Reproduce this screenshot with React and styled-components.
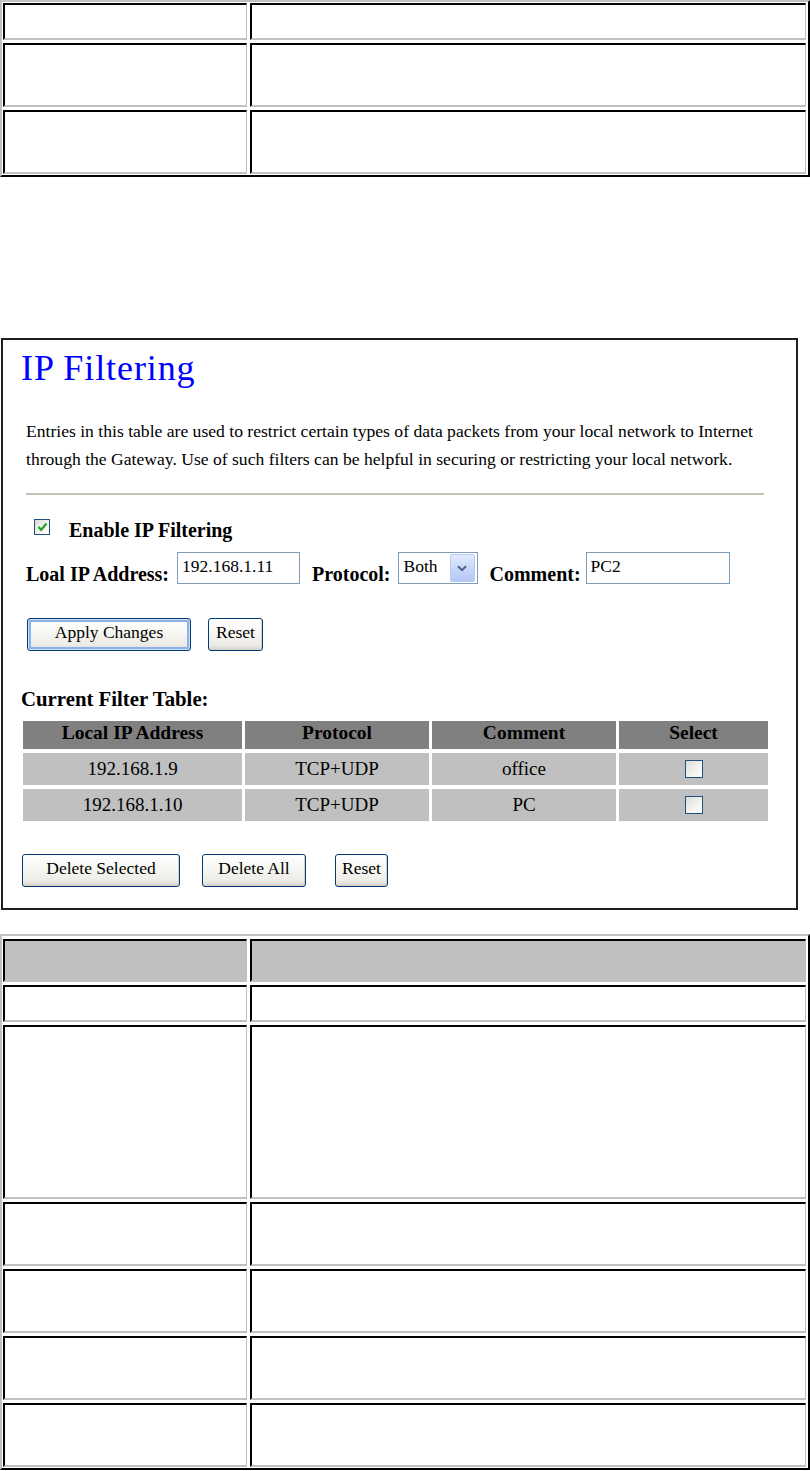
import styled, { createGlobalStyle } from "styled-components";

const GlobalStyle = createGlobalStyle`
  html, body {
    margin: 0;
    padding: 0;
    background: #fff;
  }
  body {
    font-family: "Liberation Serif", "Times New Roman", serif;
    color: #000;
  }
`;

const Page = styled.div`
  width: 810px;
`;

/* ---------- empty description tables ---------- */

const InfoTable = styled.div`
  display: grid;
  grid-template-columns: 244px 1fr;
  grid-template-rows: ${({ $rows }) => $rows.map((r) => `${r}px`).join(" ")};
  gap: 3px;
  box-sizing: border-box;
  width: 810px;
  margin-top: ${({ $top }) => $top}px;
  padding: ${({ $padTop }) => $padTop}px 2px 1px 1px;
  border: 2px solid;
  border-color: #c0c0c0 #000 #000 #c0c0c0;
`;

const InfoCell = styled.div`
  box-sizing: border-box;
  border-top: 2px solid #000;
  border-left: 2px solid #000;
  border-bottom: 2px solid #c0c0c0;
  border-right: 1px solid #c0c0c0;
  background: ${({ $head }) => ($head ? "#c0c0c0" : "#fff")};
`;

/* ---------- screenshot panel ---------- */

const Panel = styled.section`
  box-sizing: border-box;
  width: 797px;
  margin: 161px 0 0 1px;
  border: 2px solid #1f1f1f;
  padding: 8px 18px 21px 18px;
`;

const Title = styled.h1`
  margin: 0;
  font-size: 36px;
  line-height: 40px;
  font-weight: normal;
  letter-spacing: 0.9px;
  color: #0000ff;
`;

const Intro = styled.p`
  margin: 29px 0 0 5px;
  font-size: 17.6px;
  line-height: 28px;
  white-space: nowrap;
`;

const Rule = styled.hr`
  margin: 20px 0 0 5px;
  width: 738px;
  height: 2px;
  border: 0;
  background: #c4c1b5;
`;

const CheckRow = styled.div`
  display: flex;
  align-items: flex-start;
  gap: 19px;
  margin: 23px 0 0 13px;
  height: 24px;
`;

const CheckBox = styled.span`
  box-sizing: border-box;
  display: flex;
  align-items: center;
  justify-content: center;
  width: ${({ $size }) => $size}px;
  height: ${({ $size }) => $size}px;
  margin-top: ${({ $top }) => $top || 0}px;
  border: 1px solid #1c5180;
  background: linear-gradient(135deg, #dcdcd7 0%, #f4f4f0 60%, #fff 100%);
`;

const BoldText = styled.span`
  font-weight: bold;
  font-size: 20px;
  line-height: ${({ $lh }) => $lh || "24px"};
  white-space: nowrap;
`;

const FieldRow = styled.div`
  display: flex;
  align-items: flex-end;
  gap: 12px;
  margin: 10px 0 0 5px;
`;

const Pair = styled.label`
  display: flex;
  align-items: flex-end;
  gap: ${({ $gap }) => $gap || 8}px;
`;

const TextBox = styled.input`
  box-sizing: border-box;
  width: ${({ $w }) => $w}px;
  height: 32px;
  margin: 0;
  padding: 4px 4px 8px 4px;
  border: 1px solid #7f9db9;
  font-family: "Liberation Serif", "Times New Roman", serif;
  font-size: 17.5px;
  color: #000;
  background: #fff;
  outline: none;
`;

const SelectBox = styled.div`
  box-sizing: border-box;
  display: flex;
  width: 80px;
  height: 32px;
  padding: 1px 2px 1px 5px;
  border: 1px solid #7f9db9;
  background: #fff;
`;

const SelectText = styled.span`
  flex: 1;
  padding-top: 3px;
  font-size: 17.5px;
  line-height: 18px;
`;

const ArrowButton = styled.span`
  box-sizing: border-box;
  display: flex;
  align-items: center;
  justify-content: center;
  width: 25px;
  border: 1px solid #b9cbf3;
  border-radius: 2px;
  background: linear-gradient(180deg, #e3ebfe 0%, #c8d8fb 50%, #b5c9f7 100%);
`;

const ButtonRow = styled.div`
  display: flex;
  gap: ${({ $gap }) => $gap}px;
  margin: ${({ $top }) => $top}px 0 0 ${({ $indent }) => $indent}px;
`;

const XPButton = styled.button`
  box-sizing: border-box;
  width: ${({ $w }) => $w}px;
  height: 33px;
  margin: 0 0 0 ${({ $ml }) => $ml || 0}px;
  padding: 0 0 4px 0;
  border: 1px solid #003c74;
  border-radius: 3px;
  background: linear-gradient(180deg, #fff 0%, #f6f6f2 45%, #ecebe6 85%, #d8d2c6 100%);
  box-shadow: ${({ $focus }) =>
    $focus
      ? "inset 0 0 0 1px #cfe0fb, inset 0 0 0 3px #8fb0e8"
      : "inset -1px -1px 0 #d6d0c5"};
  font-family: "Liberation Serif", "Times New Roman", serif;
  font-size: 17.5px;
  color: #000;
  white-space: nowrap;
`;

const Caption = styled.div`
  margin-top: 36px;
  font-weight: bold;
  font-size: 20.8px;
  line-height: 24px;
`;

const FilterTable = styled.div`
  display: grid;
  grid-template-columns: 219px 184px 184px 149px;
  grid-template-rows: 28px 32px 32px;
  column-gap: 3px;
  row-gap: 4px;
  margin: 10px 0 0 2px;
`;

const FilterCell = styled.div`
  display: flex;
  align-items: center;
  justify-content: center;
  padding-bottom: ${({ $head }) => ($head ? 5 : 1)}px;
  background: ${({ $head }) => ($head ? "#808080" : "#c0c0c0")};
  font-weight: ${({ $head }) => ($head ? "bold" : "normal")};
  font-size: ${({ $head }) => ($head ? 19.5 : 19)}px;
  line-height: 1;
  white-space: nowrap;
`;

const Check = () => (
  <svg width="11" height="10" viewBox="0 0 11 10">
    <path d="M1.5 5 L4.2 7.8 L9.5 1.5" fill="none" stroke="#21a121" strokeWidth="2.2" />
  </svg>
);

const Chevron = () => (
  <svg width="10" height="7" viewBox="0 0 10 7">
    <path d="M1 1.2 L5 5.2 L9 1.2" fill="none" stroke="#4d6185" strokeWidth="2" />
  </svg>
);

const filters = [
  { ip: "192.168.1.9", proto: "TCP+UDP", comment: "office" },
  { ip: "192.168.1.10", proto: "TCP+UDP", comment: "PC" },
];

const App = () => {
  return (
    <Page>
      <GlobalStyle />

      <InfoTable $rows={[37, 64, 64]} $top={0} $padTop={1}>
        {Array.from({ length: 6 }).map((_, i) => (
          <InfoCell key={i} />
        ))}
      </InfoTable>

      <Panel>
        <Title>IP Filtering</Title>
        <Intro>
          Entries in this table are used to restrict certain types of data packets from your local network to Internet
          <br />
          through the Gateway. Use of such filters can be helpful in securing or restricting your local network.
        </Intro>
        <Rule />

        <CheckRow>
          <CheckBox $size={16} $top={1}>
            <Check />
          </CheckBox>
          <BoldText>Enable IP Filtering</BoldText>
        </CheckRow>

        <FieldRow>
          <Pair>
            <BoldText $lh="1">Loal IP Address:</BoldText>
            <TextBox $w={123} defaultValue="192.168.1.11" />
          </Pair>
          <Pair $gap={7}>
            <BoldText $lh="1">Protocol:</BoldText>
            <SelectBox>
              <SelectText>Both</SelectText>
              <ArrowButton>
                <Chevron />
              </ArrowButton>
            </SelectBox>
          </Pair>
          <Pair $gap={5}>
            <BoldText $lh="1">Comment:</BoldText>
            <TextBox $w={144} defaultValue="PC2" />
          </Pair>
        </FieldRow>

        <ButtonRow $top={34} $indent={6} $gap={17}>
          <XPButton $w={164} $focus>Apply Changes</XPButton>
          <XPButton $w={55}>Reset</XPButton>
        </ButtonRow>

        <Caption>Current Filter Table:</Caption>
        <FilterTable>
          <FilterCell $head>Local IP Address</FilterCell>
          <FilterCell $head>Protocol</FilterCell>
          <FilterCell $head>Comment</FilterCell>
          <FilterCell $head>Select</FilterCell>
          {filters.map((f) => [
            <FilterCell key={f.ip + "a"}>{f.ip}</FilterCell>,
            <FilterCell key={f.ip + "b"}>{f.proto}</FilterCell>,
            <FilterCell key={f.ip + "c"}>{f.comment}</FilterCell>,
            <FilterCell key={f.ip + "d"}>
              <CheckBox $size={18} />
            </FilterCell>,
          ])}
        </FilterTable>

        <ButtonRow $top={33} $indent={1} $gap={22}>
          <XPButton $w={158}>Delete Selected</XPButton>
          <XPButton $w={104}>Delete All</XPButton>
          <XPButton $w={53} $ml={7}>Reset</XPButton>
        </ButtonRow>
      </Panel>

      <InfoTable $rows={[43, 37, 174, 64, 64, 64, 64]} $top={24} $padTop={3}>
        {Array.from({ length: 14 }).map((_, i) => (
          <InfoCell key={i} $head={i < 2} />
        ))}
      </InfoTable>
    </Page>
  );
};

export default App;
